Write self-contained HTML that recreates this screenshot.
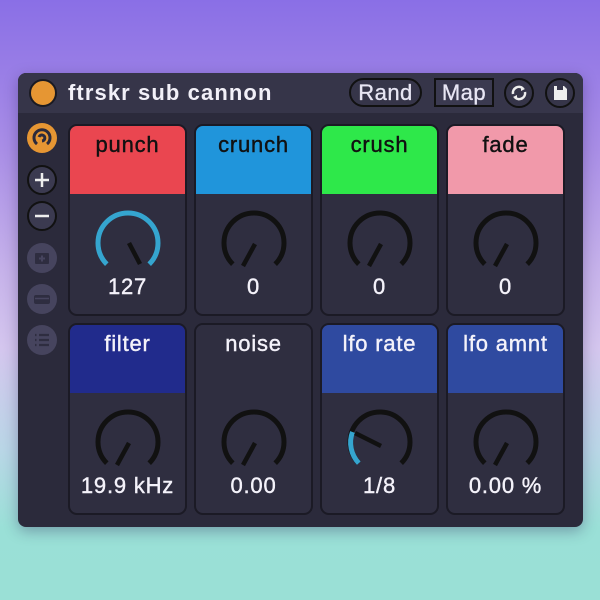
<!DOCTYPE html>
<html><head><meta charset="utf-8"><style>
*{margin:0;padding:0;box-sizing:border-box}
body{width:600px;height:600px;overflow:hidden;background:linear-gradient(180deg,#8a6fe6 0%,#a98ee6 25%,#c6b2ea 45%,#d4c6ee 58%,#b9d6e6 75%,#9ae0d7 88%,#9ae0d6 100%);font-family:"Liberation Sans",sans-serif;position:relative}
.win{position:absolute;left:18px;top:73px;width:565px;height:454px;background:#2b2a3b;border-radius:8px;box-shadow:0 4px 14px rgba(40,30,80,.35)}
.title{position:absolute;left:0;top:0;width:565px;height:40px;background:#363549;border-radius:8px 8px 0 0}
.t{position:absolute;left:50px;top:7px;color:#f2f0f8;font-weight:bold;font-size:22px;letter-spacing:1.1px}
.dot{position:absolute;left:11px;top:6px;width:28px;height:28px;border-radius:50%;background:#e69633;border:2px solid #1a1a22}
.rand{position:absolute;left:331px;top:5px;width:73px;height:29px;border:2px solid #111;border-radius:15px;color:#e8e6f4;font-size:22px;text-align:center;line-height:25px;letter-spacing:.5px;-webkit-text-stroke:.3px #e8e6f4}
.map{position:absolute;left:416px;top:5px;width:60px;height:29px;border:2px solid #111;color:#e8e6f4;font-size:22px;text-align:center;line-height:25px;background:#3b3a50;letter-spacing:.5px;-webkit-text-stroke:.3px #e8e6f4}
.ic{position:absolute;top:5px;width:30px;height:30px;border-radius:50%;border:2px solid #111}
.card{position:absolute;width:119px;height:192px;background:#2f2e40;border:2px solid #1b1a25;border-radius:9px;overflow:hidden}
.hd{height:68px;text-align:center;font-size:22px;padding-top:6px;letter-spacing:.8px;-webkit-text-stroke:.4px currentColor}
.val{position:absolute;left:0;right:0;top:148px;text-align:center;color:#f4f2fa;font-size:22px;letter-spacing:.8px;-webkit-text-stroke:.4px #f4f2fa}
svg.k{position:absolute;left:18px;top:80px;overflow:visible}
.sb{position:absolute;left:9px;width:30px;height:30px;border-radius:50%}
</style></head><body>
<div class="win">
 <div class="title">
  <div class="dot"></div>
  <div class="t">ftrskr sub cannon</div>
  <div class="rand">Rand</div>
  <div class="map">Map</div>
  <div class="ic" style="left:486px;background:#363549"><svg width="26" height="26" viewBox="0 0 26 26" style="position:absolute;left:0;top:0"><path d="M7 14 A6 6 0 0 1 17 8.5" stroke="#eee" stroke-width="2.5" fill="none"/><path d="M19 12 A6 6 0 0 1 9 17.5" stroke="#eee" stroke-width="2.5" fill="none"/><path d="M15 6 L19 9 L15 11Z M11 20 L7 17 L11 15Z" fill="#eee"/></svg></div>
  <div class="ic" style="left:527px;background:#363549"><svg width="26" height="26" viewBox="0 0 26 26" style="position:absolute;left:0;top:0"><path d="M7 6 H17 L20 9 V20 H7Z" fill="#eee"/><rect x="10" y="6" width="6" height="4" fill="#363549"/></svg></div>
 </div>
 <div class="sb" style="top:50px;background:#e69633"><svg width="30" height="30" viewBox="0 0 30 30"><path d="M10 21 A8 8 0 1 1 20 21" stroke="#2b2a3b" stroke-width="3" fill="none"/><path d="M12 14 A3 3 0 1 1 15 18" stroke="#2b2a3b" stroke-width="3" fill="none"/></svg></div>
 <div class="sb" style="top:92px;background:#3b3a50;border:2px solid #111"><svg width="26" height="26"><path d="M13 6V20M6 13H20" stroke="#eee" stroke-width="2.5"/></svg></div>
 <div class="sb" style="top:128px;background:#3b3a50;border:2px solid #111"><svg width="26" height="26"><path d="M6 13H20" stroke="#eee" stroke-width="2.5"/></svg></div>
 <div class="sb" style="top:170px;background:#46445e"><svg width="30" height="30"><rect x="8" y="10" width="14" height="11" rx="1" fill="#2e2d40"/><path d="M15 12.5V18.5M12 15.5H18" stroke="#46445e" stroke-width="2"/></svg></div>
 <div class="sb" style="top:211px;background:#46445e"><svg width="30" height="30"><rect x="7" y="11" width="16" height="9" rx="2" fill="#2e2d40"/><path d="M8 14.5H22" stroke="#46445e" stroke-width="1.5"/></svg></div>
 <div class="sb" style="top:252px;background:#46445e"><svg width="30" height="30"><path d="M12 10H22M12 15H22M12 20H22M8 10H9.5M8 15H9.5M8 20H9.5" stroke="#2e2d40" stroke-width="2.2"/></svg></div>

 <div class="card" style="left:50px;top:51px"><div class="hd" style="background:#ea4650;color:#111">punch</div>
  <svg class="k" width="80" height="72" viewBox="0 0 80 72"><path d="M18.8 58.2 A30 30 0 1 1 61.2 58.2" stroke="#35a5cf" stroke-width="5" fill="none"/><path d="M41 37 L52 58" stroke="#111" stroke-width="4.5"/></svg>
  <div class="val">127</div></div>
 <div class="card" style="left:176px;top:51px"><div class="hd" style="background:#2095db;color:#111">crunch</div>
  <svg class="k" width="80" height="72" viewBox="0 0 80 72"><path d="M18.8 58.2 A30 30 0 1 1 61.2 58.2" stroke="#111" stroke-width="5" fill="none"/><path d="M41 38 L29 60" stroke="#111" stroke-width="4.5"/></svg>
  <div class="val">0</div></div>
 <div class="card" style="left:302px;top:51px"><div class="hd" style="background:#2ee84a;color:#111">crush</div>
  <svg class="k" width="80" height="72" viewBox="0 0 80 72"><path d="M18.8 58.2 A30 30 0 1 1 61.2 58.2" stroke="#111" stroke-width="5" fill="none"/><path d="M41 38 L29 60" stroke="#111" stroke-width="4.5"/></svg>
  <div class="val">0</div></div>
 <div class="card" style="left:428px;top:51px"><div class="hd" style="background:#f199aa;color:#111">fade</div>
  <svg class="k" width="80" height="72" viewBox="0 0 80 72"><path d="M18.8 58.2 A30 30 0 1 1 61.2 58.2" stroke="#111" stroke-width="5" fill="none"/><path d="M41 38 L29 60" stroke="#111" stroke-width="4.5"/></svg>
  <div class="val">0</div></div>

 <div class="card" style="left:50px;top:250px"><div class="hd" style="background:#212b8c;color:#f4f2fa">filter</div>
  <svg class="k" width="80" height="72" viewBox="0 0 80 72"><path d="M18.8 58.2 A30 30 0 1 1 61.2 58.2" stroke="#111" stroke-width="5" fill="none"/><path d="M41 38 L29 60" stroke="#111" stroke-width="4.5"/></svg>
  <div class="val">19.9 kHz</div></div>
 <div class="card" style="left:176px;top:250px"><div class="hd" style="background:#2f2e40;color:#f4f2fa">noise</div>
  <svg class="k" width="80" height="72" viewBox="0 0 80 72"><path d="M18.8 58.2 A30 30 0 1 1 61.2 58.2" stroke="#111" stroke-width="5" fill="none"/><path d="M41 38 L29 60" stroke="#111" stroke-width="4.5"/></svg>
  <div class="val">0.00</div></div>
 <div class="card" style="left:302px;top:250px"><div class="hd" style="background:#2f4aa0;color:#f4f2fa">lfo rate</div>
  <svg class="k" width="80" height="72" viewBox="0 0 80 72"><path d="M18.8 58.2 A30 30 0 1 1 61.2 58.2" stroke="#111" stroke-width="5" fill="none"/><path d="M18.8 58.2 A30 30 0 0 1 12.5 27" stroke="#35a5cf" stroke-width="5" fill="none"/><path d="M41 41 L15 28" stroke="#111" stroke-width="4.5"/></svg>
  <div class="val">1/8</div></div>
 <div class="card" style="left:428px;top:250px"><div class="hd" style="background:#2f4aa0;color:#f4f2fa">lfo amnt</div>
  <svg class="k" width="80" height="72" viewBox="0 0 80 72"><path d="M18.8 58.2 A30 30 0 1 1 61.2 58.2" stroke="#111" stroke-width="5" fill="none"/><path d="M41 38 L29 60" stroke="#111" stroke-width="4.5"/></svg>
  <div class="val">0.00 %</div></div>
</div>
</body></html>
